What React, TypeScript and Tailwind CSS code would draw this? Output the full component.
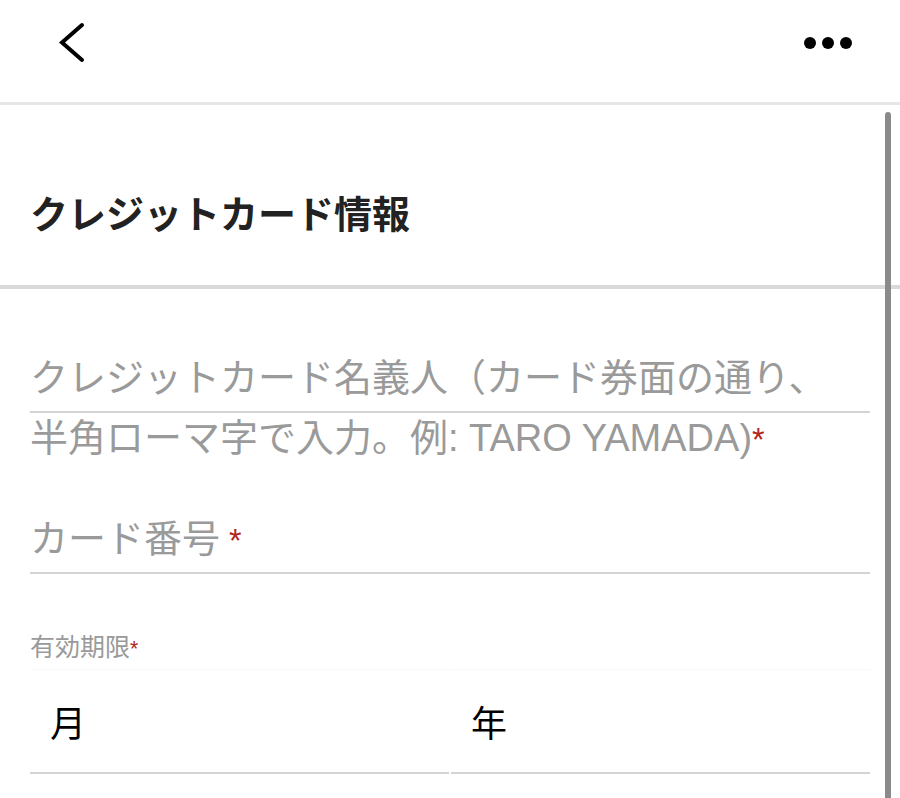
import React from "react";

function BackIcon() {
  return (
    <svg width="28" height="42" viewBox="0 0 28 42" fill="none" className="mt-[22px]">
      <path
        d="M24 3 L4 20.5 L24 38"
        stroke="#000"
        strokeWidth="4"
        strokeLinecap="round"
        strokeLinejoin="miter"
      />
    </svg>
  );
}

function MoreIcon() {
  return (
    <svg width="50" height="14" viewBox="0 0 50 14" className="mt-[36px]">
      <circle cx="7" cy="7" r="6" fill="#000" />
      <circle cx="25" cy="7" r="6" fill="#000" />
      <circle cx="43" cy="7" r="6" fill="#000" />
    </svg>
  );
}

function Req({ space }: { space?: boolean }) {
  return (
    <span className="text-[0.85em] text-[#b3261e] font-['Liberation_Sans',sans-serif]">
      {space ? " *" : "*"}
    </span>
  );
}

export default function App() {
  return (
    <div className="relative h-[798px] w-[900px] overflow-hidden bg-white font-['Liberation_Sans','Noto_Sans_CJK_JP',sans-serif]">
      {/* ヘッダー */}
      <header className="flex h-[105px] items-start justify-between border-b-[3px] border-[#e6e6e6] pl-[58px] pr-[47px]">
        <BackIcon />
        <MoreIcon />
      </header>

      {/* セクションタイトル */}
      <div className="h-[184px] border-b-4 border-[#d9d9d9] pl-[30px] pt-[82px]">
        <h1 className="text-[38px] font-bold leading-[50px] text-[#222] font-['Noto_Sans_CJK_JP',sans-serif]">
          クレジットカード情報
        </h1>
      </div>

      {/* フォーム */}
      <div className="px-[30px]">
        {/* 名義人 */}
        <div className="mt-[59px] h-[65px] border-b-2 border-[#d4d4d4]">
          <label className="block text-[38px] leading-[60px] text-[#9a9a9a]">
            クレジットカード名義人（カード券面の通り、
            <br />
            半角ローマ字で入力。例: TARO YAMADA)
            <Req />
          </label>
        </div>

        {/* カード番号 */}
        <div className="mt-[96px] h-[65px] border-b-2 border-[#d4d4d4]">
          <label className="block text-[38px] leading-[60px] text-[#9a9a9a]">
            カード番号
            <Req space />
          </label>
        </div>

        {/* 有効期限 */}
        <p className="mt-[56px] text-[25px] leading-[34px] text-[#9a9a9a]">
          有効期限
          <Req />
        </p>
        <div className="mt-[3px] grid grid-cols-2 gap-[2px]">
          <div className="flex h-[105px] items-center border-t border-b-2 border-t-[#f9f9f9] border-b-[#d4d4d4] pl-[20px] pt-[8px] text-[36px] text-black">
            月
          </div>
          <div className="flex h-[105px] items-center border-t border-b-2 border-t-[#f9f9f9] border-b-[#d4d4d4] pl-[20px] pt-[8px] text-[36px] text-black">
            年
          </div>
        </div>
      </div>

      {/* スクロールバー */}
      <div className="absolute left-[885px] top-[112px] h-[720px] w-[6px] rounded-full bg-[#8a8a8a]" />
    </div>
  );
}
